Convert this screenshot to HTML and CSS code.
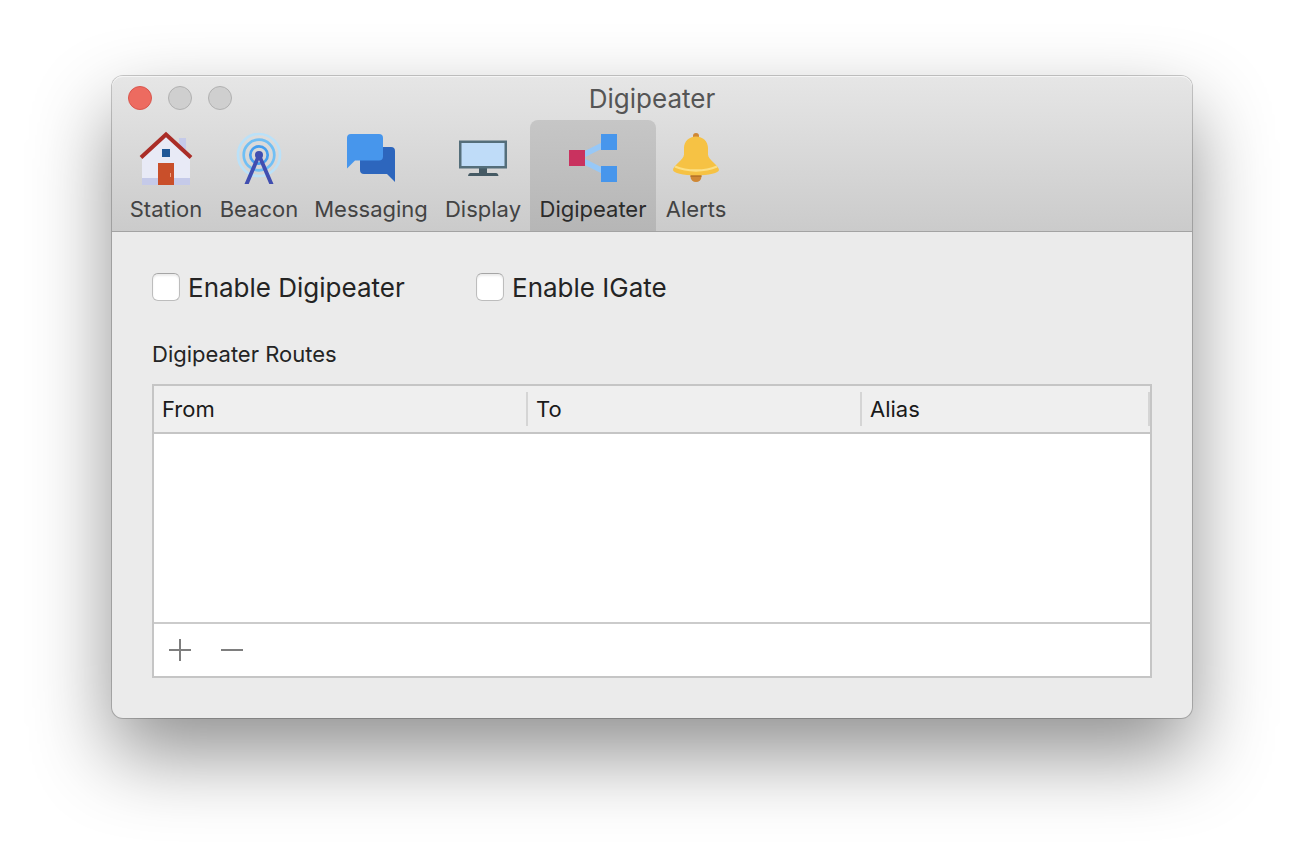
FILE: index.html
```
<!DOCTYPE html>
<html lang="en">
<head>
<meta charset="utf-8">
<title>Digipeater</title>
<link rel="stylesheet" href="styles.css">
</head>
<body>
<main class="window">
  <header class="toolbar">
    <div class="titlebar">
      <div class="lights">
        <button class="light light-close" aria-label="Close"></button>
        <button class="light" aria-label="Minimize" disabled></button>
        <button class="light" aria-label="Zoom" disabled></button>
      </div>
      <h1 class="title">Digipeater</h1>
    </div>
    <nav class="tabs">
      <button class="tab">
        <svg class="icon" viewBox="0 0 64 64" aria-hidden="true">
          <path fill="#c5cae9" d="M45 12h7v20h-7z"/>
          <path fill="#e8eaf6" d="M8 59V31L32 8l24 23v28z"/>
          <path fill="#c5cae9" d="M8 52h48v7H8z"/>
          <path fill="#c94f2a" d="M24 37h16v22H24z"/>
          <path fill="#205796" d="M28 23h8v8h-8z"/>
          <path fill="none" stroke="#aa2d27" stroke-width="4" d="M7 31.500L32 8.500l25 23"/>
          <path fill="#f0a080" d="M36 47h1v4h-1z"/>
        </svg>
        <span>Station</span>
      </button>
      <button class="tab">
        <svg class="icon" viewBox="0 0 64 64" aria-hidden="true">
          <g fill="none" stroke-width="2.700">
            <circle cx="32" cy="29" r="21" stroke="#bbe1f8"/>
            <circle cx="32" cy="29" r="15.300" stroke="#70bff5"/>
            <circle cx="32" cy="29" r="8.700" stroke="#459eef"/>
          </g>
          <circle cx="32" cy="29" r="4" fill="#404eb0"/>
          <path fill="#404eb0" d="M30 29h4l12.500 29h-4.200L32 34 21.700 58h-4.200z"/>
        </svg>
        <span>Beacon</span>
      </button>
      <button class="tab">
        <svg class="icon" viewBox="0 0 64 64" aria-hidden="true">
          <path fill="#2d66bd" d="M25 21h27a4 4 0 0 1 4 4v31l-8-8H25a4 4 0 0 1-4-4V25a4 4 0 0 1 4-4z"/>
          <path fill="#4796ec" d="M12 8h28a4 4 0 0 1 4 4v18.500a4 4 0 0 1-4 4H16l-8 8V12a4 4 0 0 1 4-4z"/>
        </svg>
        <span>Messaging</span>
      </button>
      <button class="tab">
        <svg class="icon" viewBox="0 0 64 64" aria-hidden="true">
          <path fill="#455a64" d="M28 42h8v5h9q2 0 2.500 3H17q.500-3 2.500-3H28z"/>
          <path fill="#546e7a" d="M8 14.500h48v28H8z"/>
          <path fill="#bfdcf8" d="M10.500 17h43v23h-43z"/>
        </svg>
        <span>Display</span>
      </button>
      <button class="tab tab-active" aria-current="page">
        <svg class="icon" viewBox="0 0 64 64" aria-hidden="true">
          <path fill="none" stroke="#97c8f7" stroke-width="5.500" d="M48 16L16 32l32 16"/>
          <path fill="#c9325f" d="M8 24h16v16H8z"/>
          <path fill="#4796ec" d="M40 8h16v16H40zM40 40h16v16H40z"/>
        </svg>
        <span>Digipeater</span>
      </button>
      <button class="tab">
        <svg class="icon" viewBox="0 0 64 64" aria-hidden="true">
          <path fill="#cf8734" d="M29 12v-2a3 3 0 0 1 6 0v2z"/>
          <circle cx="32" cy="50.500" r="5.500" fill="#cf8734"/>
          <path fill="#b87428" d="M26.600 47h10.800v4H26.600z"/>
          <path fill="#f6c244" d="M32 10.500c7 0 12 5 12 11.500v6.500c0 5 11 11 11 15.500 0 3-10 5.300-23 5.300S9 47 9 44c0-4.500 11-10.500 11-15.500V22c0-6.500 5-11.500 12-11.500z"/>
          <path fill="none" stroke="#fbdf85" stroke-width="2.400" d="M11 40.500Q20 44.500 32 44.500t21-4"/>
        </svg>
        <span>Alerts</span>
      </button>
    </nav>
  </header>
  <section class="content">
    <div class="options">
      <label class="option"><input class="check" type="checkbox"><span class="option-text">Enable Digipeater</span></label>
      <label class="option"><input class="check" type="checkbox"><span class="option-text">Enable IGate</span></label>
    </div>
    <h2 class="caption" id="routes">Digipeater Routes</h2>
    <div class="panel">
      <table class="routes" aria-labelledby="routes">
        <thead>
          <tr><th class="from"><span>From</span></th><th class="to"><span>To</span></th><th><span>Alias</span></th></tr>
        </thead>
        <tbody>
          <tr><td colspan="3"></td></tr>
        </tbody>
      </table>
      <div class="actions">
        <button class="action" aria-label="Add route">
          <svg class="glyph" viewBox="0 0 22 22" aria-hidden="true"><path d="M0 11h22M11 0v22"/></svg>
        </button>
        <button class="action" aria-label="Remove route">
          <svg class="glyph" viewBox="0 0 22 22" aria-hidden="true"><path d="M0 11h22"/></svg>
        </button>
      </div>
    </div>
  </section>
</main>
</body>
</html>
```
FILE: styles.css
```
* { box-sizing: border-box; }

body {
  margin: 0;
  padding: 76px 112px 148px;
  background: #fff;
  color: #242424;
  font-family: Inter, "Liberation Sans", sans-serif;
  font-size: 22px;
  line-height: 28px;
}

button {
  margin: 0;
  padding: 0;
  border: 0;
  background: none;
  color: inherit;
  font: inherit;
}

.window {
  border-radius: 11px;
  background: #ebebeb;
  box-shadow: 0 0 0 1px rgba(0, 0, 0, .2), 0 36px 80px rgba(0, 0, 0, .44);
}

.toolbar {
  border-bottom: 1px solid #a3a3a3;
  border-radius: 11px 11px 0 0;
  background: linear-gradient(#e6e6e6, #cbcbcb);
  box-shadow: inset 0 1px 0 #f5f5f5;
}

.titlebar {
  display: grid;
  grid-template-columns: 1fr auto 1fr;
  align-items: center;
  height: 44px;
  padding: 0 16px;
}

.lights {
  display: flex;
  gap: 16px;
}

.light {
  width: 24px;
  height: 24px;
  border: 1px solid #b1b1b1;
  border-radius: 50%;
  background: #cfcfcf;
}

.light-close {
  border-color: #d9564d;
  background: #ed6b60;
}

.title {
  margin: 0;
  padding-top: 2px;
  color: #555;
  font-size: 26px;
  font-weight: 400;
}

.tabs {
  display: grid;
  grid-template-columns: 92px 94px 130px 94px 126px 80px;
  padding-left: 8px;
  color: #434343;
}

.tab {
  display: flex;
  flex-direction: column;
  align-items: center;
  gap: 5px;
  padding: 6px 0 8px;
  border-radius: 8px 8px 0 0;
}

.tab-active {
  background: linear-gradient(#c6c6c6, #b6b6b6);
  color: #2b2b2b;
}

.icon {
  width: 64px;
  height: 64px;
}

.content {
  padding: 36px 40px 40px;
}

.options {
  display: grid;
  grid-template-columns: 324px 1fr;
}

.option {
  display: flex;
  align-items: center;
  gap: 8px;
  font-size: 26px;
  line-height: 36px;
}

.option-text {
  padding-top: 2px;
}

.check {
  appearance: none;
  width: 28px;
  height: 28px;
  margin: 0;
  border: 1px solid #bdbdbd;
  border-top-color: #a5a5a5;
  border-radius: 6px;
  background: #fff;
  box-shadow: inset 0 2px 2px #ededed;
}

.caption {
  margin: 34px 0 16px;
  font-size: 22px;
  font-weight: 400;
}

.panel {
  border: 2px solid #c5c5c5;
  background: #fff;
}

.routes {
  width: 100%;
  border-spacing: 0;
  table-layout: fixed;
  color: #1a1a1a;
}

.from { width: 374px; }
.to { width: 334px; }

.routes th {
  padding: 6px 0;
  border-bottom: 2px solid #c5c5c5;
  background: #efefef;
  font-weight: 400;
  text-align: left;
}

.routes th span {
  display: block;
  padding: 3px 8px;
  border-right: 2px solid #d5d5d5;
}

.routes td {
  height: 188px;
  padding: 0;
}

.actions {
  display: flex;
  gap: 30px;
  height: 54px;
  padding: 0 15px;
  border-top: 2px solid #cbcbcb;
}

.action {
  display: flex;
  align-items: center;
}

.glyph {
  width: 22px;
  height: 22px;
  fill: none;
  stroke: #7e7e7e;
  stroke-width: 2;
}
```
